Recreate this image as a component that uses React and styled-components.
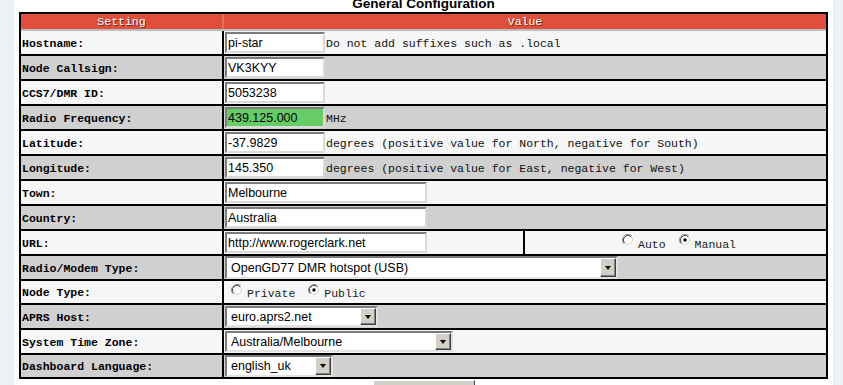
import React from "react";
import styled, { createGlobalStyle } from "styled-components";

const GlobalStyle = createGlobalStyle`
  html, body {
    margin: 0;
    padding: 0;
    background: #edf0f5;
  }
`;

/*::::: STYLES :::::*/
const Page = styled.div`
  width: 819px;
  height: 385px;
  margin-left: 14px;
  padding: 0 5px;
  box-sizing: border-box;
  background: #fff;
  overflow: hidden;
  font-family: "Liberation Sans", Arial, sans-serif;
`;

const Title = styled.h2`
  margin: -2px 0 2px;
  height: 12px;
  font-size: 13.5px;
  line-height: 12px;
  font-weight: bold;
  text-align: center;
  color: #000;
`;

const Table = styled.div`
  border: 2px solid #000;
`;

const HeadRow = styled.div`
  display: flex;
  height: 15px;
  background: #df4f3c;
  border-bottom: 2px solid #bdbdbd;
`;

const HeadCell = styled.div`
  box-sizing: border-box;
  width: ${(p) => (p.$w ? `${p.$w}px` : "auto")};
  flex: ${(p) => (p.$w ? "none" : 1)};
  border-right: ${(p) => (p.$w ? "2px solid #e5705f" : "none")};
  display: flex;
  align-items: center;
  justify-content: center;
  font: 11.5px "Liberation Mono", "Courier New", monospace;
  color: #fff;
  text-shadow: 1px 1px 0 rgba(0, 0, 0, 0.55);
`;

const Row = styled.div`
  display: flex;
  height: ${(p) => p.$h || 23}px;
  background: ${(p) => (p.$alt ? "#d0d0d0" : "#f6f6f6")};

  & + & {
    border-top: 2px solid #000;
  }
`;

const Label = styled.div`
  box-sizing: border-box;
  width: 203px;
  flex: none;
  padding: 1px 0 0 1px;
  border-right: 2px solid #000;
  display: flex;
  align-items: center;
  font: bold 11.5px "Liberation Mono", "Courier New", monospace;
  color: #000;
`;

const Cell = styled.div`
  box-sizing: border-box;
  width: ${(p) => (p.$w ? `${p.$w}px` : "auto")};
  flex: ${(p) => (p.$w ? "none" : 1)};
  padding-left: ${(p) => (p.$center ? "7px" : "1px")};
  border-right: ${(p) => (p.$w ? "2px solid #000" : "none")};
  display: flex;
  align-items: center;
  justify-content: ${(p) => (p.$center ? "center" : "flex-start")};
`;

const Field = styled.input`
  box-sizing: border-box;
  width: ${(p) => p.$w}px;
  height: 21px;
  margin: 0;
  padding: 0 1px;
  border: 2px solid;
  border-color: #7c7c7c #dadada #dadada #7c7c7c;
  background: ${(p) => (p.$hot ? "#66cc66" : "#fff")};
  font: 12.5px "Liberation Sans", Arial, sans-serif;
  color: #000;
  outline: none;
`;

const Hint = styled.span`
  margin-left: 1px;
  padding-top: 1px;
  font: 11.5px "Liberation Mono", "Courier New", monospace;
  color: #111;
  white-space: pre;
`;

const SelectBox = styled.div`
  box-sizing: border-box;
  width: ${(p) => p.$w}px;
  height: ${(p) => p.$h || 21}px;
  border: 2px solid;
  border-color: #7c7c7c #e2e2e2 #e2e2e2 #7c7c7c;
  background: #fff;
  display: flex;
  align-items: stretch;
  font: 12.5px "Liberation Sans", Arial, sans-serif;
  color: #000;
`;

const SelectText = styled.span`
  flex: 1;
  padding-left: 4px;
  display: flex;
  align-items: center;
`;

const DropButton = styled.span`
  box-sizing: border-box;
  width: 16px;
  margin: 0;
  background: #d4d0c8;
  border: 1px solid;
  border-color: #fff #404040 #404040 #fff;
  box-shadow: inset -1px -1px 0 #808080;
  display: flex;
  align-items: center;
  justify-content: center;
`;

const Arrow = styled.span`
  width: 0;
  height: 0;
  border-left: 3.5px solid transparent;
  border-right: 3.5px solid transparent;
  border-top: 4px solid #000;
`;

const RadioGroup = styled.div`
  display: flex;
  align-items: center;
  padding-left: ${(p) => p.$pad ?? 6}px;
`;

const Option = styled.label`
  display: flex;
  align-items: center;
  margin-right: 13px;
  font: 11.5px "Liberation Mono", "Courier New", monospace;
  color: #222;

  &:last-child {
    margin-right: 0;
  }

  svg {
    margin: 0 4px 5px 0;
    flex: none;
  }

  span {
    padding-top: 3px;
  }
`;

const Footer = styled.div`
  display: flex;
  justify-content: center;
  padding-top: 1px;
`;

const SaveButton = styled.button`
  width: 102px;
  height: 22px;
  background: #d4d0c8;
  border: 1px solid;
  border-color: #fff #404040 #404040 #fff;
  font: 12px "Liberation Sans", Arial, sans-serif;
`;

function Radio({ checked }) {
  return (
    <svg width="12" height="12" viewBox="0 0 12 12">
      <circle cx="6" cy="6" r="5" fill="#fff" />
      <path d="M2.11 9.89 A5.5 5.5 0 0 1 9.89 2.11" stroke="#8a8a8a" fill="none" />
      <path d="M9.89 2.11 A5.5 5.5 0 0 1 2.11 9.89" stroke="#fff" fill="none" />
      <path d="M2.82 9.18 A4.5 4.5 0 0 1 9.18 2.82" stroke="#404040" fill="none" />
      <path d="M9.18 2.82 A4.5 4.5 0 0 1 2.82 9.18" stroke="#d4d0c8" fill="none" />
      {checked && <circle cx="6" cy="6" r="1.7" fill="#000" />}
    </svg>
  );
}

function Select({ w, h, value }) {
  return (
    <SelectBox $w={w} $h={h}>
      <SelectText>{value}</SelectText>
      <DropButton>
        <Arrow />
      </DropButton>
    </SelectBox>
  );
}

export default function App() {
  return (
    <>
      <GlobalStyle />
      <Page>
        <Title>General Configuration</Title>
        <Table>
          <HeadRow>
            <HeadCell $w={203}>Setting</HeadCell>
            <HeadCell>Value</HeadCell>
          </HeadRow>

          <Row>
            <Label>Hostname:</Label>
            <Cell>
              <Field $w={100} defaultValue="pi-star" />
              <Hint>Do not add suffixes such as .local</Hint>
            </Cell>
          </Row>
          <Row $alt>
            <Label>Node Callsign:</Label>
            <Cell>
              <Field $w={100} defaultValue="VK3KYY" />
            </Cell>
          </Row>
          <Row>
            <Label>CCS7/DMR ID:</Label>
            <Cell>
              <Field $w={100} defaultValue="5053238" />
            </Cell>
          </Row>
          <Row $alt>
            <Label>Radio Frequency:</Label>
            <Cell>
              <Field $w={100} $hot defaultValue="439.125.000" />
              <Hint>MHz</Hint>
            </Cell>
          </Row>
          <Row>
            <Label>Latitude:</Label>
            <Cell>
              <Field $w={100} defaultValue="-37.9829" />
              <Hint>degrees (positive value for North, negative for South)</Hint>
            </Cell>
          </Row>
          <Row $alt>
            <Label>Longitude:</Label>
            <Cell>
              <Field $w={100} defaultValue="145.350" />
              <Hint>degrees (positive value for East, negative for West)</Hint>
            </Cell>
          </Row>
          <Row>
            <Label>Town:</Label>
            <Cell>
              <Field $w={202} defaultValue="Melbourne" />
            </Cell>
          </Row>
          <Row $alt>
            <Label>Country:</Label>
            <Cell>
              <Field $w={202} defaultValue="Australia" />
            </Cell>
          </Row>
          <Row>
            <Label>URL:</Label>
            <Cell $w={301}>
              <Field $w={202} defaultValue="http://www.rogerclark.net" />
            </Cell>
            <Cell $center>
              <RadioGroup $pad={0}>
                <Option>
                  <Radio />
                  <span>Auto</span>
                </Option>
                <Option>
                  <Radio checked />
                  <span>Manual</span>
                </Option>
              </RadioGroup>
            </Cell>
          </Row>
          <Row $alt>
            <Label>Radio/Modem Type:</Label>
            <Cell>
              <Select w={393} h={23} value="OpenGD77 DMR hotspot (USB)" />
            </Cell>
          </Row>
          <Row $h={22}>
            <Label>Node Type:</Label>
            <Cell>
              <RadioGroup>
                <Option>
                  <Radio />
                  <span>Private</span>
                </Option>
                <Option>
                  <Radio checked />
                  <span>Public</span>
                </Option>
              </RadioGroup>
            </Cell>
          </Row>
          <Row $alt>
            <Label>APRS Host:</Label>
            <Cell>
              <Select w={153} value="euro.aprs2.net" />
            </Cell>
          </Row>
          <Row>
            <Label>System Time Zone:</Label>
            <Cell>
              <Select w={228} value="Australia/Melbourne" />
            </Cell>
          </Row>
          <Row $alt $h={22}>
            <Label>Dashboard Language:</Label>
            <Cell>
              <Select w={108} h={22} value="english_uk" />
            </Cell>
          </Row>
        </Table>
        <Footer>
          <SaveButton>Apply Changes</SaveButton>
        </Footer>
      </Page>
    </>
  );
}
